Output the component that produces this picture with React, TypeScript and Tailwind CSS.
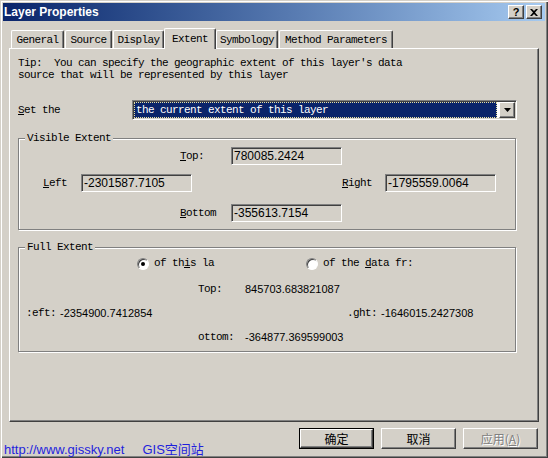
import React from "react";

const mono = { fontFamily: '"Liberation Mono", "Noto Sans CJK SC", monospace', fontSize: "11px", letterSpacing: "-0.6px" } as React.CSSProperties;

const sunken =
  "border border-t-[#808080] border-l-[#808080] border-b-white border-r-white shadow-[inset_1px_1px_0_#404040,inset_-1px_-1px_0_#d4d0c8]";
const raised =
  "border border-t-white border-l-white border-r-[#404040] border-b-[#404040] shadow-[inset_-1px_-1px_0_#808080,inset_1px_1px_0_#d4d0c8]";

function Field({ value, w = "w-[111px]" }: { value: string; w?: string }) {
  return (
    <div className={`${sunken} ${w} h-[18px] bg-[#d4d0c8] flex items-center pl-[2px] font-['Liberation_Sans',sans-serif] text-[12px] text-black leading-none`}>
      {value}
    </div>
  );
}

function Tab({ label, w, ml, active }: { label: string; w: string; ml: string; active?: boolean }) {
  return (
    <div
      className={`${w} ${ml} ${active ? "h-[21px] mb-[-1px] relative z-10 pt-[2px]" : "h-[18px] pt-[1px]"} border-l border-t border-l-white border-t-white border-r border-r-[#404040] shadow-[inset_-1px_0_0_#808080] bg-[#d4d0c8] flex items-start justify-center rounded-t-[2px]`}
      style={mono}
    >
      <span className="leading-[16px]">{label}</span>
    </div>
  );
}

function Radio({ checked }: { checked?: boolean }) {
  return (
    <div className="w-[12px] h-[12px] rounded-full bg-white border border-t-[#808080] border-l-[#808080] border-b-white border-r-white shadow-[inset_1px_1px_0_#404040] flex items-center justify-center">
      {checked && <div className="w-[4px] h-[4px] rounded-full bg-black" />}
    </div>
  );
}

function Group({ title, h, mt, children }: { title: string; h: string; mt: string; children: React.ReactNode }) {
  return (
    <div className={`relative ml-[8px] w-[498px] ${h} ${mt} border border-[#808080] shadow-[1px_1px_0_white,inset_1px_1px_0_white]`}>
      <div className="absolute left-[6px] top-[-7px] bg-[#d4d0c8] px-[2px] leading-[12px]" style={mono}>
        {title}
      </div>
      {children}
    </div>
  );
}

export default function App() {
  return (
    <div className="w-[548px] h-[458px] overflow-hidden bg-[#d4d0c8] pt-[3px] px-[3px] flex flex-col shadow-[inset_1px_1px_0_#d4d0c8,inset_2px_2px_0_white,inset_-1px_-1px_0_#404040,inset_-2px_-2px_0_#808080] text-black">
      {/* Title bar */}
      <div className="h-[18px] shrink-0 bg-gradient-to-r from-[#0a246a] to-[#a6caf0] flex items-center pl-[1px] pr-[3px]">
        <span className="text-white font-bold text-[12px] font-['Liberation_Sans',sans-serif] leading-none">Layer Properties</span>
        <div className="ml-auto flex gap-[2px]">
          <div className={`${raised} w-[16px] h-[14px] bg-[#d4d0c8] flex items-center justify-center font-bold text-[11px] font-['Liberation_Sans',sans-serif] leading-none`}>?</div>
          <div className={`${raised} w-[16px] h-[14px] bg-[#d4d0c8] flex items-center justify-center`}>
            <svg width="8" height="7" viewBox="0 0 8 7">
              <path d="M0 0h2l2 2 2-2h2L5 3.5 8 7H6L4 5 2 7H0l3-3.5z" fill="black" />
            </svg>
          </div>
        </div>
      </div>

      {/* Tabs */}
      <div className="mt-[7px] h-[20px] shrink-0 flex items-end pl-[8px]">
        <Tab label="General" w="w-[53px]" ml="ml-0" />
        <Tab label="Source" w="w-[47px]" ml="ml-[1px]" />
        <Tab label="Display" w="w-[51px]" ml="ml-[1px]" />
        <Tab label="Extent" w="w-[52px]" ml="ml-[0px]" active />
        <Tab label="Symbology" w="w-[62px]" ml="ml-[0px]" />
        <Tab label="Method Parameters" w="w-[114px]" ml="ml-[1px]" />
      </div>

      {/* Panel */}
      <div className="ml-[6px] w-[530px] h-[374px] shrink-0 border border-l-white border-t-white border-r-[#404040] border-b-[#404040] shadow-[inset_-1px_-1px_0_#808080] flex flex-col">
        <div className="ml-[8px] mt-[8px] leading-[12px] whitespace-pre" style={mono}>
          {"Tip:  You can specify the geographic extent of this layer's data\nsource that will be represented by this layer"}
        </div>

        <div className="mt-[19px] ml-[8px] flex items-center h-[20px]">
          <div className="w-[114px]" style={mono}>
            <span className="underline">S</span>et the
          </div>
          <div className={`${sunken} w-[385px] h-[20px] bg-white flex p-[1px]`}>
            <div className="flex-1 bg-[#0a246a] text-white border border-dotted border-[#e8e0a0] flex items-center pl-[1px] mr-[2px]" style={mono}>
              the current extent of this layer
            </div>
            <div className={`${raised} w-[16px] h-full bg-[#d4d0c8] flex items-center justify-center`}>
              <svg width="7" height="4" viewBox="0 0 7 4">
                <path d="M0 0h7L3.5 4z" fill="black" />
              </svg>
            </div>
          </div>
        </div>

        <Group title="Visible Extent" h="h-[92px]" mt="mt-[18px]">
          <div className="mt-[8px] pl-[161px] flex items-center">
            <div className="w-[51px]" style={mono}><span className="underline">T</span>op:</div>
            <Field value="780085.2424" />
          </div>
          <div className="mt-[9px] pl-[24px] flex items-center">
            <div className="w-[38px]" style={mono}><span className="underline">L</span>eft</div>
            <Field value="-2301587.7105" />
            <div className="ml-[150px] w-[43px]" style={mono}><span className="underline">R</span>ight</div>
            <Field value="-1795559.0064" />
          </div>
          <div className="mt-[12px] pl-[161px] flex items-center">
            <div className="w-[51px]" style={mono}><span className="underline">B</span>ottom</div>
            <Field value="-355613.7154" />
          </div>
        </Group>

        <Group title="Full Extent" h="h-[105px]" mt="mt-[17px]">
          <div className="mt-[9px] pl-[118px] flex items-center h-[13px]">
            <Radio checked />
            <span className="ml-[5px]" style={mono}>of th<span className="underline">i</span>s la</span>
            <div className="ml-[92px]"><Radio /></div>
            <span className="ml-[5px]" style={mono}>of the <span className="underline">d</span>ata fr:</span>
          </div>
          <div className="mt-[13px] pl-[179px] flex items-center h-[12px]">
            <div className="w-[47px]" style={mono}>Top:</div>
            <span className="font-['Liberation_Sans',sans-serif] text-[11px]">845703.683821087</span>
          </div>
          <div className="mt-[12px] pl-[7px] flex items-center h-[12px]">
            <div className="w-[34px]" style={mono}>:eft:</div>
            <span className="w-[287px] font-['Liberation_Sans',sans-serif] text-[11px]">-2354900.7412854</span>
            <div className="w-[34px]" style={mono}>.ght:</div>
            <span className="font-['Liberation_Sans',sans-serif] text-[11px]">-1646015.2427308</span>
          </div>
          <div className="mt-[12px] pl-[179px] flex items-center h-[12px]">
            <div className="w-[47px]" style={mono}>ottom:</div>
            <span className="font-['Liberation_Sans',sans-serif] text-[11px]">-364877.369599003</span>
          </div>
        </Group>
      </div>

      {/* Bottom row */}
      <div className="flex items-start shrink-0">
        <div className="mt-[21px] ml-[1px] flex text-[13px] leading-[14px] text-[#1f1fdd] font-['Liberation_Sans','Noto_Sans_CJK_SC',sans-serif] whitespace-nowrap">
          <span>http://www.gissky.net</span>
          <span className="ml-[18px]">GIS空间站</span>
        </div>
        <div className="ml-auto mr-[7px] mt-[6px] flex gap-[7px]">
          <div className="border border-black w-[75px] h-[21px]">
            <div className={`${raised} w-full h-full bg-[#d4d0c8] flex items-center justify-center text-[12px] font-['Noto_Sans_CJK_SC',sans-serif] leading-none`}>确定</div>
          </div>
          <div className={`${raised} w-[75px] h-[21px] bg-[#d4d0c8] flex items-center justify-center text-[12px] font-['Noto_Sans_CJK_SC',sans-serif] leading-none`}>取消</div>
          <div className={`${raised} w-[75px] h-[21px] bg-[#d4d0c8] flex items-center justify-center text-[12px] font-['Noto_Sans_CJK_SC',sans-serif] leading-none text-[#808080] [text-shadow:1px_1px_0_white]`}>应用(<span className="underline">A</span>)</div>
        </div>
      </div>
    </div>
  );
}
